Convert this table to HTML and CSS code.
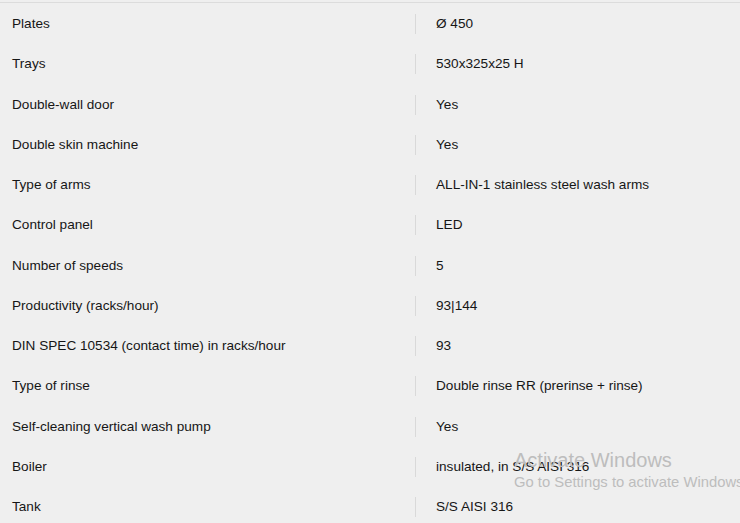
FILE: index.html
```html
<!DOCTYPE html>
<html>
<head>
<meta charset="utf-8">
<link rel="stylesheet" href="styles.css">
</head>
<body>
<div class="specs">
  <div class="row"><div class="label">Plates</div><div class="value">Ø 450</div></div>
  <div class="row"><div class="label">Trays</div><div class="value">530x325x25 H</div></div>
  <div class="row"><div class="label">Double-wall door</div><div class="value">Yes</div></div>
  <div class="row"><div class="label">Double skin machine</div><div class="value">Yes</div></div>
  <div class="row"><div class="label">Type of arms</div><div class="value">ALL-IN-1 stainless steel wash arms</div></div>
  <div class="row"><div class="label">Control panel</div><div class="value">LED</div></div>
  <div class="row"><div class="label">Number of speeds</div><div class="value">5</div></div>
  <div class="row"><div class="label">Productivity (racks/hour)</div><div class="value">93|144</div></div>
  <div class="row"><div class="label">DIN SPEC 10534 (contact time) in racks/hour</div><div class="value">93</div></div>
  <div class="row"><div class="label">Type of rinse</div><div class="value">Double rinse RR (prerinse + rinse)</div></div>
  <div class="row"><div class="label">Self-cleaning vertical wash pump</div><div class="value">Yes</div></div>
  <div class="row"><div class="label">Boiler</div><div class="value">insulated, in S/S AISI 316</div></div>
  <div class="row"><div class="label">Tank</div><div class="value">S/S AISI 316</div></div>
</div>
<div class="watermark">
  <div class="wm-title">Activate Windows</div>
  <div class="wm-sub">Go to Settings to activate Windows.</div>
</div>
</body>
</html>
```
FILE: styles.css
```css
html, body {
  margin: 0;
  padding: 0;
  background: #efefef;
  overflow: hidden;
}
body {
  font-family: "Liberation Sans", Arial, sans-serif;
  font-size: 13.6px;
  color: #161616;
  width: 740px;
  height: 523px;
  position: relative;
}
.specs {
  margin-top: 2px;
  padding-top: 1px;
  border-top: 1px solid #dcdcdc;
}
.row {
  display: grid;
  grid-template-columns: 415px 1fr;
  align-items: center;
  height: 40.25px;
}
.label {
  padding-left: 12px;
  line-height: 20px;
}
.value {
  border-left: 1px solid #d9d9d9;
  padding-left: 20px;
  line-height: 20px;
  height: 20px;
  white-space: nowrap;
}
.watermark {
  position: absolute;
  left: 514px;
  top: 448px;
  color: #bdbdbd;
  white-space: nowrap;
  pointer-events: none;
}
.wm-title {
  font-size: 20px;
  line-height: 24px;
}
.wm-sub {
  font-size: 14.8px;
  line-height: 18px;
  margin-top: 1px;
}
```
